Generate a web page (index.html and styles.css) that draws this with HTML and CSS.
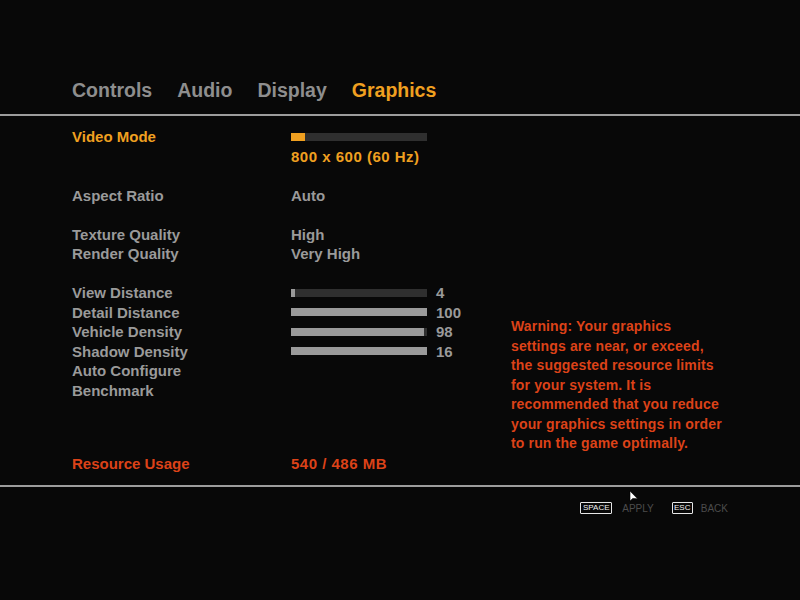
FILE: index.html
```html
<!DOCTYPE html>
<html lang="en">
<head>
    <meta charset="UTF-8">
    <title>Graphics Settings</title>
    <link rel="stylesheet" href="styles.css">
</head>
<body>
    <div class="screen">
        <nav class="tabs">
            <span class="tab">Controls</span>
            <span class="tab">Audio</span>
            <span class="tab">Display</span>
            <span class="tab active">Graphics</span>
        </nav>
        <div class="rule"></div>

        <div class="panel">
            <div class="main">
                <div class="settings">
                    <div class="group">
                        <div class="row selected">
                            <span class="label">Video Mode</span>
                            <span class="value"><span class="bar"><span class="fill orange" style="width: 14px"></span></span></span>
                        </div>
                        <div class="row selected">
                            <span class="label"></span>
                            <span class="value digits">800 x 600 (60 Hz)</span>
                        </div>
                    </div>
                    <div class="group">
                        <div class="row">
                            <span class="label">Aspect Ratio</span>
                            <span class="value">Auto</span>
                        </div>
                    </div>
                    <div class="group">
                        <div class="row">
                            <span class="label">Texture Quality</span>
                            <span class="value">High</span>
                        </div>
                        <div class="row">
                            <span class="label">Render Quality</span>
                            <span class="value">Very High</span>
                        </div>
                    </div>
                    <div class="group">
                        <div class="row">
                            <span class="label">View Distance</span>
                            <span class="value"><span class="bar"><span class="fill" style="width: 4px"></span></span><span class="num">4</span></span>
                        </div>
                        <div class="row">
                            <span class="label">Detail Distance</span>
                            <span class="value"><span class="bar"><span class="fill" style="width: 136px"></span></span><span class="num">100</span></span>
                        </div>
                        <div class="row">
                            <span class="label">Vehicle Density</span>
                            <span class="value"><span class="bar"><span class="fill" style="width: 133px"></span></span><span class="num">98</span></span>
                        </div>
                        <div class="row">
                            <span class="label">Shadow Density</span>
                            <span class="value"><span class="bar"><span class="fill" style="width: 136px"></span></span><span class="num">16</span></span>
                        </div>
                        <div class="row">
                            <span class="label">Auto Configure</span>
                        </div>
                        <div class="row">
                            <span class="label">Benchmark</span>
                        </div>
                    </div>
                </div>
                <p class="warning">
                    Warning: Your graphics<br>
                    settings are near, or exceed,<br>
                    the suggested resource limits<br>
                    for your system. It is<br>
                    recommended that you reduce<br>
                    your graphics settings in order<br>
                    to run the game optimally.
                </p>
            </div>
            <div class="row usage">
                <span class="label">Resource Usage</span>
                <span class="value digits">540 / 486 MB</span>
            </div>
        </div>
        <div class="rule"></div>

        <div class="footer">
            <span class="key space">SPACE</span>
            <span class="action">APPLY</span>
            <span class="key esc">ESC</span>
            <span class="action">BACK</span>
        </div>

        <svg class="cursor" width="10" height="13" viewBox="0 0 10 13">
            <path d="M1 1 L1 11 L3.8 8.4 L8.6 8.8 Z" fill="#ffffff" stroke="#000" stroke-width="0.6"/>
        </svg>
    </div>
</body>
</html>
```

FILE: styles.css
```css
html, body {
    margin: 0;
    padding: 0;
    background: #080808;
}
.screen {
    position: relative;
    width: 800px;
    height: 600px;
    font-family: "Liberation Sans", Arial, sans-serif;
    font-weight: bold;
    color: #9a9a9a;
}
.tabs {
    display: flex;
    gap: 25px;
    padding: 78px 0 0 72px;
    margin-bottom: 12px;
    font-size: 19.5px;
    line-height: 24px;
}
.tab { color: #8e8e8e; }
.tab.active { color: #f0a020; }
.rule {
    height: 2px;
    background: #9c9c9c;
}
.panel {
    padding: 11px 0 12px 72px;
}
.main {
    display: flex;
    min-height: 326.5px;
}
.settings {
    width: 439px;
}
.group + .group {
    margin-top: 19.5px;
}
.row {
    display: grid;
    grid-template-columns: 219px auto;
    height: 19.5px;
    line-height: 19.5px;
    font-size: 15px;
}
.row.selected { color: #f0a020; }
.value {
    display: flex;
    align-items: center;
}
.value.digits { letter-spacing: 0.5px; }
.bar {
    display: block;
    width: 136px;
    height: 8px;
    background: #2f2f2f;
}
.fill {
    display: block;
    height: 100%;
    background: #9a9a9a;
}
.fill.orange { background: #f0a020; }
.num {
    margin-left: 9px;
}
.warning {
    align-self: flex-end;
    margin: 0;
    font-size: 14px;
    line-height: 19.5px;
    letter-spacing: 0.15px;
    color: #dc4218;
}
.row.usage { color: #dc4218; }
.footer {
    display: flex;
    justify-content: flex-end;
    align-items: center;
    padding: 15px 72px 0 0;
    font-weight: normal;
    font-size: 10px;
}
.key {
    display: inline-block;
    box-sizing: border-box;
    height: 12px;
    line-height: 10px;
    border: 1px solid #e6e6e6;
    border-radius: 1px;
    color: #f0f0f0;
    font-size: 8px;
    text-align: center;
}
.key.space { width: 32px; margin-right: 10px; }
.key.esc { width: 21px; margin-right: 8px; }
.action {
    color: #4c4c4c;
    margin-right: 18px;
}
.action:last-child { margin-right: 0; }
.cursor {
    position: absolute;
    left: 629px;
    top: 490px;
}
```
